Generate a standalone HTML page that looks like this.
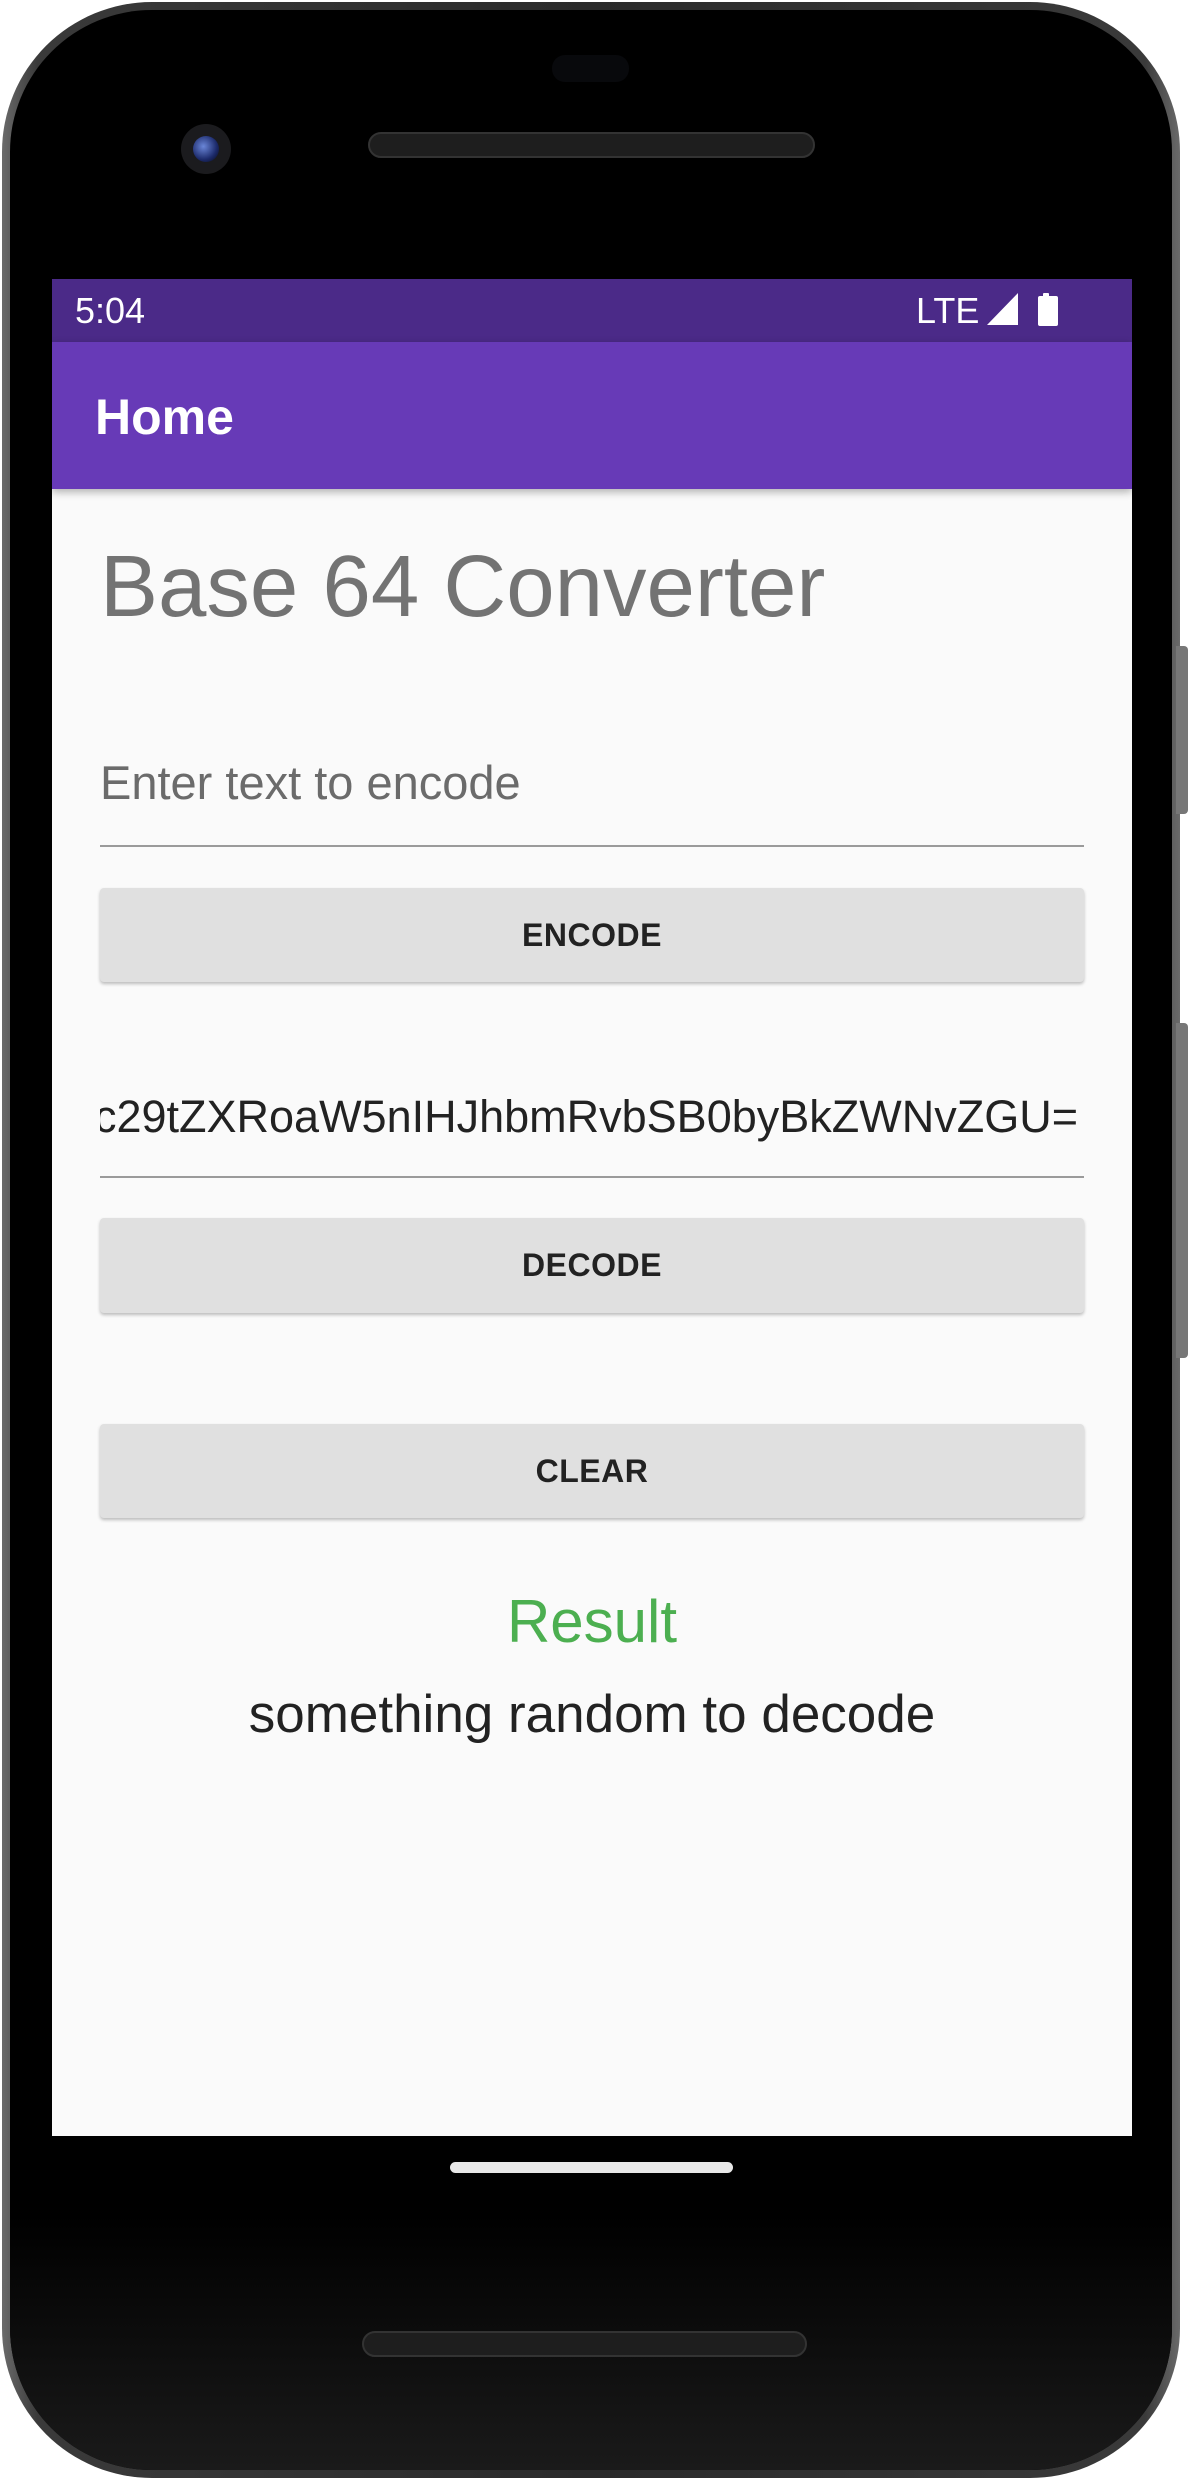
<!DOCTYPE html>
<html><head><meta charset="utf-8"><style>
*{margin:0;padding:0;box-sizing:border-box}
html,body{width:1194px;height:2480px;background:#fff;overflow:hidden;font-family:"Liberation Sans",Roboto,sans-serif}
.abs{position:absolute}
.rim{left:2px;top:2px;width:1178px;height:2476px;border-radius:150px;background:linear-gradient(90deg,#6a6a6a,#3a3a3a 3%,#2a2a2a 50%,#3a3a3a 97%,#6a6a6a);}
.body{left:10px;top:10px;width:1162px;height:2460px;border-radius:142px;background:#000;}
.bodyb{left:10px;top:1900px;width:1162px;height:570px;border-radius:0 0 142px 142px;background:linear-gradient(180deg,#000 0%,#000 55%,#1a1a1a 100%);}
.btn{background:#e0e0e0;border-radius:4px;box-shadow:0 2px 3px rgba(0,0,0,.25);left:100px;width:984px;text-align:center;font-size:32px;font-weight:bold;color:#222;letter-spacing:0.5px}
</style></head><body>
<div class="abs rim"></div>
<div class="abs" style="left:1176px;top:646px;width:12px;height:168px;background:#777;border-radius:0 4px 4px 0"></div>
<div class="abs" style="left:1176px;top:1023px;width:12px;height:335px;background:#777;border-radius:0 4px 4px 0"></div>
<div class="abs body"></div>
<div class="abs bodyb"></div>
<div class="abs" style="left:552px;top:55px;width:77px;height:27px;border-radius:13px;background:#08090c"></div>
<div class="abs" style="left:181px;top:124px;width:50px;height:50px;border-radius:50%;background:#1b1b1e"></div>
<div class="abs" style="left:193px;top:136px;width:26px;height:26px;border-radius:50%;background:radial-gradient(circle at 40% 40%,#6a86d8,#1c2a6a 60%,#05070f)"></div>
<div class="abs" style="left:368px;top:132px;width:447px;height:26px;border-radius:13px;background:#1e1e1e;border:2px solid #333"></div>
<div class="abs" style="left:362px;top:2331px;width:445px;height:26px;border-radius:13px;background:#1e1e1e;border:2px solid #333"></div>
<div class="abs" style="left:450px;top:2162px;width:283px;height:11px;border-radius:6px;background:#e8e8e8"></div>
<div class="abs" style="left:52px;top:279px;width:1080px;height:1857px;background:#fafafa;overflow:hidden">
  <div class="abs" style="left:0;top:0;width:1080px;height:63px;background:#4b2a88"></div>
  <div class="abs" style="left:23px;top:10px;font-size:36px;color:#fff;line-height:44px">5:04</div>
  <div class="abs" style="left:864px;top:10px;font-size:36px;color:#fff;line-height:44px">LTE</div>
  <svg class="abs" style="left:935px;top:14px" width="31" height="32"><polygon points="31,0 31,32 0,32" fill="#fff"/></svg>
  <div class="abs" style="left:991px;top:14px;width:6px;height:4px;background:#fff;border-radius:1px 1px 0 0"></div>
  <div class="abs" style="left:986px;top:17px;width:20px;height:30px;background:#fff;border-radius:2px"></div>
  <div class="abs" style="left:0;top:63px;width:1080px;height:147px;background:#673ab7;box-shadow:0 3px 8px rgba(0,0,0,.3)"></div>
  <div class="abs" style="left:43px;top:108px;font-size:50px;font-weight:bold;color:#fff;line-height:60px">Home</div>
  <div class="abs" style="left:48px;top:258px;font-size:87px;color:#737373;line-height:100px;white-space:nowrap">Base 64 Converter</div>
  <div class="abs" style="left:48px;top:478px;font-size:47px;color:#6b6b6b;line-height:52px;white-space:nowrap">Enter text to encode</div>
  <div class="abs" style="left:48px;top:566px;width:984px;height:2px;background:#9a9a9a"></div>
  <div class="abs btn" style="left:48px;top:609px;height:94px;line-height:94px">ENCODE</div>
  <div class="abs" style="left:48px;top:808px;width:978px;height:60px;overflow:hidden;direction:rtl;font-size:45px;color:#222;line-height:60px;white-space:nowrap"><span style="direction:ltr;unicode-bidi:bidi-override">c29tZXRoaW5nIHJhbmRvbSB0byBkZWNvZGU=</span></div>
  <div class="abs" style="left:48px;top:897px;width:984px;height:2px;background:#9a9a9a"></div>
  <div class="abs btn" style="left:48px;top:939px;height:95px;line-height:95px">DECODE</div>
  <div class="abs btn" style="left:48px;top:1145px;height:94px;line-height:94px">CLEAR</div>
  <div class="abs" style="left:0;top:1308px;width:1080px;text-align:center;font-size:60px;color:#4caf50;line-height:70px">Result</div>
  <div class="abs" style="left:0;top:1406px;width:1080px;text-align:center;font-size:53px;color:#222;line-height:60px">something random to decode</div>
</div>
</body></html>
